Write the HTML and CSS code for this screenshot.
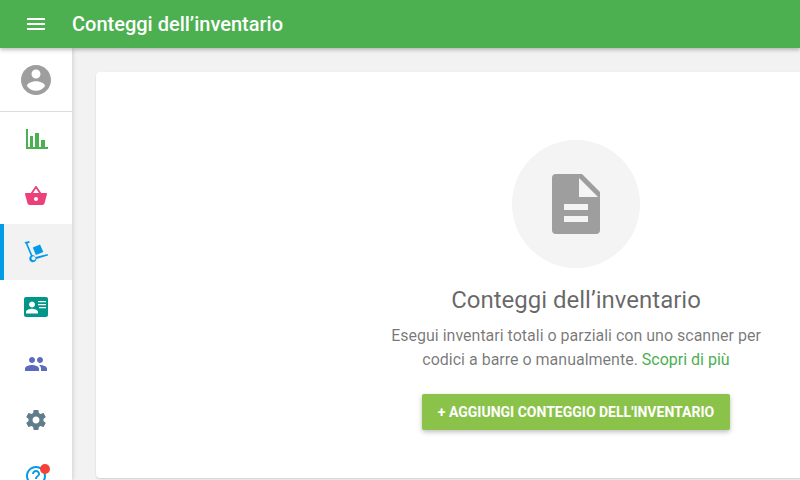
FILE: index.html
```html
<!DOCTYPE html>
<html lang="it">
<head>
<meta charset="utf-8">
<title>Conteggi dell’inventario</title>
<link rel="stylesheet" href="styles.css">
</head>
<body>
<header class="topbar">
  <button class="menu-btn" aria-label="Menu">
    <svg class="icon" viewBox="0 0 24 24"><path d="M3 18h18v-2H3v2zm0-5h18v-2H3v2zm0-7v2h18V6H3z"/></svg>
  </button>
  <h1 class="topbar-title">Conteggi dell’inventario</h1>
</header>
<div class="body-row">
  <nav class="sidebar">
    <div class="profile">
      <svg class="icon-profile" viewBox="0 0 24 24"><path d="M12 2C6.48 2 2 6.48 2 12s4.48 10 10 10 10-4.48 10-10S17.52 2 12 2zm0 3c1.66 0 3 1.34 3 3s-1.34 3-3 3-3-1.34-3-3 1.34-3 3-3zm0 14.2c-2.5 0-4.71-1.28-6-3.22.03-1.99 4-3.08 6-3.08 1.99 0 5.97 1.09 6 3.08-1.29 1.94-3.5 3.22-6 3.22z"/></svg>
    </div>
    <a class="nav-item c-green">
      <svg class="icon-nav" viewBox="0 0 24 24"><path d="M2 2h2v18h20v2H2z M6 9h3v11H6z M11 6h4v14h-4z M17 13h4v7h-4z" transform="translate(0 -1)"/></svg>
    </a>
    <a class="nav-item c-pink">
      <svg class="icon-nav" viewBox="0 0 24 24"><path d="M17.21 9l-4.38-6.56c-.19-.28-.51-.42-.83-.42-.32 0-.64.14-.83.43L6.79 9H2c-.55 0-1 .45-1 1 0 .09.01.18.04.27l2.54 9.27c.23.84 1 1.46 1.92 1.46h13c.92 0 1.69-.62 1.93-1.46l2.54-9.27L23 10c0-.55-.45-1-1-1h-4.79zM9 9l3-4.4L15 9H9zm3 8c-1.1 0-2-.9-2-2s.9-2 2-2 2 .9 2 2-.9 2-2 2z"/></svg>
    </a>
    <a class="nav-item nav-item-active c-blue">
      <svg class="icon-nav" viewBox="0 0 24 24"><path d="M0.4 2.2 5 1l1 1.6-2.6.8 4.9 11.6a3.6 3.6 0 0 1 3.1 2.1L23.6 14l.4 1.5-11.6 3.4a3.6 3.6 0 1 1-5.6-3.2L2 4.300z M9.500 16.300a2 2 0 1 0 .01 0z"/><path d="M8.800 7.500 16 4.500l3.300 7.500-7.400 3z"/></svg>
    </a>
    <a class="nav-item c-teal">
      <svg class="icon-nav" viewBox="0 0 24 24"><path fill-rule="evenodd" d="M2 1h20a2 2 0 0 1 2 2v16a2 2 0 0 1-2 2H2a2 2 0 0 1-2-2V3a2 2 0 0 1 2-2zM8 5.500a3 3 0 1 0 .01 0zM2 17.500h12v-1.500c0-2-4-3.200-6-3.200s-6 1.200-6 3.200zM14 5h8v1.300h-8zM14 8h8v1.300h-8zM15 11h7v1.300h-7z"/></svg>
    </a>
    <a class="nav-item c-indigo">
      <svg class="icon-nav" viewBox="0 0 24 24"><path d="M16 11c1.660 0 3-1.340 3-3s-1.340-3-3-3-3 1.340-3 3 1.340 3 3 3zm-8 0c1.660 0 3-1.340 3-3S9.660 5 8 5 5 6.340 5 8s1.340 3 3 3zm0 2c-2.330 0-7 1.170-7 3.500V19h14v-2.500c0-2.330-4.670-3.500-7-3.500zm8 0c-.29 0-.62.020-.97.050 1.160.84 1.970 1.970 1.970 3.450V19h6v-2.500c0-2.330-4.670-3.500-7-3.500z"/></svg>
    </a>
    <a class="nav-item c-slate">
      <svg class="icon-nav" viewBox="0 0 24 24"><path d="M19.430 12.980c.04-.32.07-.64.07-.98s-.03-.66-.07-.98l2.110-1.650c.19-.15.24-.42.12-.64l-2-3.460c-.12-.22-.39-.3-.61-.22l-2.490 1c-.52-.4-1.080-.73-1.690-.98l-.38-2.650C14.460 2.180 14.250 2 14 2h-4c-.25 0-.46.180-.49.420l-.38 2.650c-.61.250-1.170.59-1.690.98l-2.490-1c-.23-.09-.49 0-.61.220l-2 3.460c-.13.220-.07.490.12.640l2.110 1.650c-.04.320-.07.650-.07.980s.03.660.07.980l-2.110 1.650c-.19.150-.24.420-.12.640l2 3.460c.12.220.39.300.61.220l2.490-1c.52.400 1.080.730 1.690.980l.38 2.650c.03.240.24.420.49.420h4c.25 0 .46-.180.49-.420l.38-2.650c.61-.250 1.170-.590 1.690-.980l2.490 1c.23.090.49 0 .61-.220l2-3.460c.12-.220.07-.490-.12-.640l-2.110-1.650zM12 15.500c-1.930 0-3.500-1.570-3.500-3.500s1.570-3.500 3.500-3.500 3.500 1.570 3.500 3.500-1.570 3.500-3.500 3.500z"/></svg>
    </a>
    <a class="nav-item c-sky nav-item-help">
      <svg class="icon-nav" viewBox="0 0 24 24"><path d="M12 2C6.480 2 2 6.480 2 12s4.480 10 10 10 10-4.480 10-10S17.520 2 12 2zm0 18c-4.410 0-8-3.590-8-8s3.590-8 8-8 8 3.590 8 8-3.590 8-8 8zm-1-4h2v2h-2zm1-10c-2.210 0-4 1.790-4 4h2c0-1.100.9-2 2-2s2 .9 2 2c0 2-3 1.750-3 5h2c0-2.250 3-2.500 3-5 0-2.210-1.790-4-4-4z"/></svg>
      <span class="badge"></span>
    </a>
  </nav>
  <main class="content">
    <section class="card">
      <div class="empty-circle">
        <svg class="icon-doc" viewBox="0 0 48 60"><path fill-rule="evenodd" d="M4 0h26l18 18v38a4 4 0 0 1-4 4H4a4 4 0 0 1-4-4V4a4 4 0 0 1 4-4zM27 4v19h19zM12 30v6h24v-6zM12 42v6h24v-6z"/></svg>
      </div>
      <h2 class="empty-title">Conteggi dell’inventario</h2>
      <p class="empty-text">Esegui inventari totali o parziali con uno scanner per<br>codici a barre o manualmente. <a class="link">Scopri di più</a></p>
      <button class="add-btn">+ Aggiungi conteggio dell'inventario</button>
    </section>
  </main>
</div>
</body>
</html>
```

FILE: styles.css
```css
* { box-sizing: border-box; }
html, body { margin: 0; height: 480px; overflow: hidden; }
body {
  width: 800px;
  display: flex;
  flex-direction: column;
  font-family: Roboto, "Liberation Sans", sans-serif;
  background: #f2f2f2;
}
.topbar {
  flex: none;
  height: 48px;
  display: flex;
  align-items: center;
  background: #4caf50;
  color: #fff;
  box-shadow: 0 2px 4px rgba(0,0,0,.25);
  position: relative;
  z-index: 2;
}
.menu-btn {
  width: 72px;
  height: 48px;
  padding: 0;
  border: 0;
  background: none;
  display: flex;
  align-items: center;
  justify-content: center;
}
.icon { width: 24px; height: 24px; fill: #fff; }
.topbar-title { margin: 0; font-size: 20px; font-weight: 500; line-height: 48px; }
.body-row { flex: 1; display: flex; min-height: 0; }
.sidebar {
  flex: none;
  width: 72px;
  background: #fff;
  box-shadow: 0 0 5px rgba(0,0,0,.2);
  overflow: hidden;
  position: relative;
  z-index: 1;
}
.profile {
  height: 64px;
  display: flex;
  align-items: center;
  justify-content: center;
  border-bottom: 1px solid #dcdcdc;
}
.icon-profile { width: 36px; height: 36px; fill: #9e9e9e; }
.nav-item {
  height: 56px;
  display: flex;
  align-items: center;
  justify-content: center;
  position: relative;
}
.nav-item-active { background: #f2f2f2; border-left: 4px solid #039be5; padding-right: 4px; }
.icon-nav { width: 24px; height: 24px; fill: currentColor; }
.c-green { color: #4caf50; }
.c-pink { color: #ec407a; }
.c-blue { color: #039be5; }
.c-teal { color: #009688; }
.c-indigo { color: #5c6bc0; }
.c-slate { color: #607d8b; }
.c-sky { color: #039be5; }
.badge {
  position: absolute;
  left: 40px;
  top: 16px;
  width: 10px;
  height: 10px;
  border-radius: 50%;
  background: #f44336;
}
.content { flex: 1; min-width: 0; padding: 24px 0 2px 24px; overflow: hidden; }
.card {
  width: 960px;
  height: 406px;
  padding-top: 68px;
  background: #fff;
  border-radius: 4px;
  box-shadow: 0 1px 2px rgba(0,0,0,.15);
  display: flex;
  flex-direction: column;
  align-items: center;
}
.empty-circle {
  flex: none;
  width: 128px;
  height: 128px;
  border-radius: 50%;
  background: #f4f4f4;
  display: flex;
  align-items: center;
  justify-content: center;
}
.icon-doc { width: 48px; height: 60px; fill: #9e9e9e; }
.empty-title {
  margin: 16px 0 0;
  font-size: 24px;
  font-weight: 400;
  line-height: 32px;
  color: rgba(0,0,0,.6);
}
.empty-text {
  margin: 8px 0 0;
  font-size: 16px;
  line-height: 24px;
  text-align: center;
  color: rgba(0,0,0,.54);
}
.link { color: #4caf50; }
.add-btn {
  margin-top: 22px;
  height: 36px;
  padding: 0 16px;
  border: 0;
  border-radius: 2px;
  background: #8bc34a;
  color: #fff;
  font-family: inherit;
  font-size: 14px;
  font-weight: 700;
  text-transform: uppercase;
  box-shadow: 0 2px 5px rgba(0,0,0,.26);
}
```
